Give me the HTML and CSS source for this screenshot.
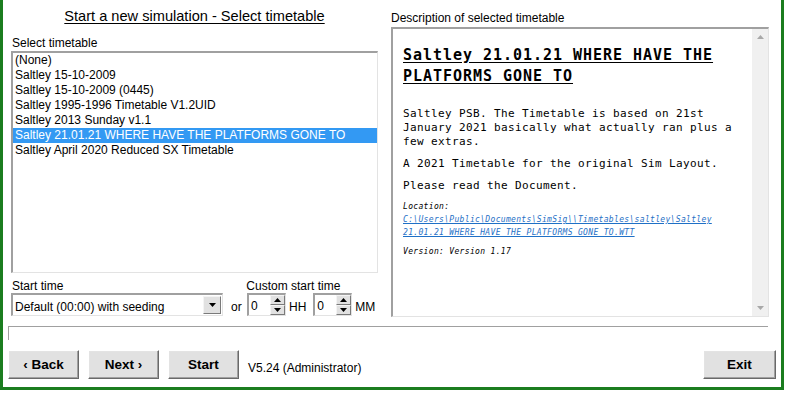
FILE: index.html
```html
<!DOCTYPE html>
<html>
<head>
<meta charset="utf-8">
<link rel="stylesheet" href="styles.css">
</head>
<body>
<div class="window">
  <div class="main">
    <div class="left">
      <div class="title">Start a new simulation - Select timetable</div>
      <div class="label lbl-select">Select timetable</div>
      <div class="listbox">
        <div class="item">(None)</div>
        <div class="item">Saltley 15-10-2009</div>
        <div class="item">Saltley 15-10-2009 (0445)</div>
        <div class="item">Saltley 1995-1996 Timetable V1.2UID</div>
        <div class="item">Saltley 2013 Sunday v1.1</div>
        <div class="item selected">Saltley 21.01.21 WHERE HAVE THE PLATFORMS GONE TO</div>
        <div class="item">Saltley April 2020 Reduced SX Timetable</div>
      </div>
      <div class="time-labels">
        <span class="label">Start time</span>
        <span class="label custom-lbl">Custom start time</span>
      </div>
      <div class="time-row">
        <div class="combo">
          <span class="combo-text">Default (00:00) with seeding</span>
          <span class="combo-btn"><svg width="7" height="4" viewBox="0 0 7 4"><path d="M0 0h7L3.5 4z" fill="#000"/></svg></span>
        </div>
        <span class="or">or</span>
        <div class="spin">
          <span class="spin-val">0</span>
          <span class="spin-btns">
            <span class="spin-half"><svg width="7" height="4" viewBox="0 0 7 4"><path d="M0 4h7L3.5 0z" fill="#000"/></svg></span>
            <span class="spin-half"><svg width="7" height="4" viewBox="0 0 7 4"><path d="M0 0h7L3.5 4z" fill="#000"/></svg></span>
          </span>
        </div>
        <span class="unit">HH</span>
        <div class="spin spin2">
          <span class="spin-val">0</span>
          <span class="spin-btns">
            <span class="spin-half"><svg width="7" height="4" viewBox="0 0 7 4"><path d="M0 4h7L3.5 0z" fill="#000"/></svg></span>
            <span class="spin-half"><svg width="7" height="4" viewBox="0 0 7 4"><path d="M0 0h7L3.5 4z" fill="#000"/></svg></span>
          </span>
        </div>
        <span class="unit">MM</span>
      </div>
    </div>
    <div class="right">
      <div class="label lbl-desc">Description of selected timetable</div>
      <div class="memo">
        <div class="memo-content">
          <h1 class="tt-head">Saltley 21.01.21 WHERE HAVE THE PLATFORMS GONE TO</h1>
          <p class="tt-body">Saltley PSB. The Timetable is based on 21st January 2021 basically what actually ran plus a few extras.</p>
          <p class="tt-body">A 2021 Timetable for the original Sim Layout.</p>
          <p class="tt-body">Please read the Document.</p>
          <p class="tt-small tt-loc">Location:<br><a class="tt-link" href="#">C:\Users\Public\Documents\SimSig\\Timetables\saltley\Saltley 21.01.21 WHERE HAVE THE PLATFORMS GONE TO.WTT</a></p>
          <p class="tt-small tt-ver">Version: Version 1.17</p>
        </div>
        <div class="vscroll">
          <svg width="7" height="4" viewBox="0 0 7 4"><path d="M0 4h7L3.5 0z" fill="#a8a8a8"/></svg>
          <svg width="7" height="4" viewBox="0 0 7 4"><path d="M0 0h7L3.5 4z" fill="#a8a8a8"/></svg>
        </div>
      </div>
    </div>
  </div>
  <div class="status"></div>
  <div class="buttons">
    <button class="btn">&lsaquo; Back</button>
    <button class="btn">Next &rsaquo;</button>
    <button class="btn">Start</button>
    <span class="version">V5.24 (Administrator)</span>
    <button class="btn btn-exit">Exit</button>
  </div>
</div>
</body>
</html>
```
FILE: styles.css
```css
html, body {
  margin: 0;
  padding: 0;
  background: #ffffff;
}
body {
  font-family: "Liberation Sans", Arial, sans-serif;
  color: #000;
}
.window {
  width: 784px;
  height: 390px;
  box-sizing: border-box;
  border: 3px solid #1b7d1f;
  border-top: 0;
  background: #fff;
  display: flex;
  flex-direction: column;
}
.main {
  display: flex;
  padding-left: 8px;
  gap: 13px;
}
.left {
  width: 367px;
  display: flex;
  flex-direction: column;
}
.right {
  width: 378px;
  display: flex;
  flex-direction: column;
}
.title {
  padding-top: 8px;
  font-size: 14.6px;
  line-height: 16px;
  height: 16px;
  text-align: center;
  text-decoration: underline;
  text-underline-offset: 2px;
}
.label {
  font-size: 12px;
  line-height: 14px;
}
.lbl-select {
  margin-top: 12px;
  padding-left: 1px;
}
.listbox {
  margin-top: 1px;
  height: 222px;
  box-sizing: border-box;
  border-style: solid;
  border-width: 2px 1px 1px 2px;
  border-color: #a0a0a0 #e3e3e3 #e3e3e3 #a0a0a0;
  background: #fff;
}
.item {
  font-size: 12px;
  line-height: 15px;
  height: 15px;
  padding-left: 2px;
  white-space: nowrap;
}
.item.selected {
  background: #3399f3;
  color: #fff;
}
.time-labels {
  margin-top: 6px;
  display: flex;
  padding-left: 1px;
}
.custom-lbl {
  margin-left: 183px;
}
.time-row {
  display: flex;
  align-items: center;
  height: 23px;
}
.combo {
  width: 212px;
  height: 23px;
  box-sizing: border-box;
  border-style: solid;
  border-width: 2px 1px 1px 2px;
  border-color: #a0a0a0 #e3e3e3 #e3e3e3 #a0a0a0;
  display: flex;
  align-items: center;
  justify-content: space-between;
  padding-left: 2px;
  padding-right: 1px;
}
.combo-text {
  font-size: 12px;
  line-height: 14px;
  padding-top: 3px;
}
.combo-btn {
  width: 18px;
  height: 18px;
  box-sizing: border-box;
  background: #e1e1e1;
  border: 1px solid;
  border-color: #f4f4f4 #7a7a7a #7a7a7a #f4f4f4;
  display: flex;
  align-items: center;
  justify-content: center;
}
.or {
  font-size: 12px;
  margin-left: 8px;
  width: 16px;
  padding-top: 4px;
}
.spin {
  width: 39px;
  height: 23px;
  box-sizing: border-box;
  border-style: solid;
  border-width: 2px 1px 1px 2px;
  border-color: #a0a0a0 #e3e3e3 #e3e3e3 #a0a0a0;
  display: flex;
  justify-content: space-between;
  align-items: stretch;
}
.spin2 {
  margin-left: 7px;
}
.spin-val {
  font-size: 12px;
  line-height: 14px;
  padding-left: 2px;
  padding-top: 4px;
}
.spin-btns {
  width: 15px;
  display: flex;
  flex-direction: column;
}
.spin-half {
  flex: 1;
  background: #e1e1e1;
  box-sizing: border-box;
  border: 1px solid;
  border-color: #f4f4f4 #7a7a7a #7a7a7a #f4f4f4;
  display: flex;
  align-items: center;
  justify-content: center;
}
.unit {
  font-size: 12px;
  margin-left: 3px;
  padding-top: 4px;
}
.lbl-desc {
  margin-top: 11px;
}
.memo {
  margin-top: 2px;
  height: 290px;
  box-sizing: border-box;
  border-style: solid;
  border-width: 2px 1px 1px 2px;
  border-color: #a0a0a0 #e3e3e3 #e3e3e3 #a0a0a0;
  display: flex;
  background: #fff;
}
.memo-content {
  flex: 1;
  padding: 16px 6px 0 10px;
  font-family: "DejaVu Sans Mono", monospace;
}
.tt-head {
  margin: 0;
  font-size: 15px;
  line-height: 21px;
  font-weight: bold;
  letter-spacing: 0.97px;
  text-decoration: underline;
  text-underline-offset: 2px;
}
.tt-body {
  margin: 0 0 8px;
  font-size: 11px;
  line-height: 14px;
  letter-spacing: 0.38px;
}
.tt-head + .tt-body {
  margin-top: 20px;
}
.tt-small {
  margin: 0;
  font-size: 8px;
  line-height: 13px;
  letter-spacing: 0.33px;
  font-style: italic;
}
.tt-loc {
  margin-top: -1px;
}
.tt-ver {
  margin-top: 6px;
}
.tt-link {
  color: #1f70c6;
  text-decoration: underline;
}
.vscroll {
  width: 16px;
  background: #f0f0f0;
  display: flex;
  flex-direction: column;
  justify-content: space-between;
  align-items: center;
  padding: 6px 0 6px;
  box-sizing: border-box;
}
.status {
  margin-top: 9px;
  margin-left: 5px;
  width: 760px;
  height: 14px;
  box-sizing: border-box;
  border-top: 1px solid #a0a0a0;
  border-left: 1px solid #a0a0a0;
}
.buttons {
  margin-top: 10px;
  display: flex;
  align-items: center;
  padding-left: 5px;
  padding-right: 5px;
  gap: 9px;
}
.btn {
  width: 71px;
  height: 29px;
  box-sizing: border-box;
  background: #e1e1e1;
  border: 1px solid;
  border-color: #fff #696969 #696969 #fff;
  box-shadow: inset -1px -1px #a0a0a0, inset 1px 1px #e3e3e3;
  font-family: "Liberation Sans", Arial, sans-serif;
  font-weight: bold;
  font-size: 13.5px;
  color: #000;
  padding: 0;
  margin: 0;
}
.version {
  font-size: 12px;
  padding-top: 6px;
}
.btn-exit {
  margin-left: auto;
  width: 73px;
}
```
